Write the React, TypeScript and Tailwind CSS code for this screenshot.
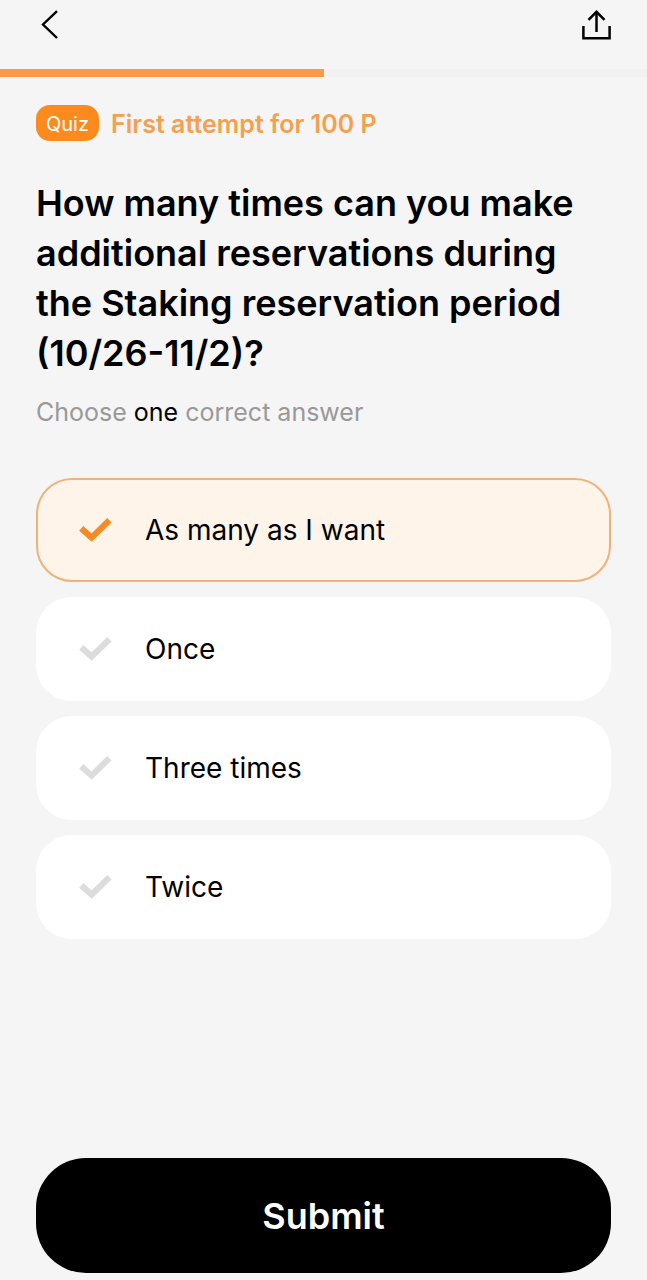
import React, { useState } from 'react'

interface Answer {
  id: string
  label: string
}

const answers: Answer[] = [
  { id: 'any', label: 'As many as I want' },
  { id: 'once', label: 'Once' },
  { id: 'three', label: 'Three times' },
  { id: 'twice', label: 'Twice' },
]

function BackIcon() {
  return (
    <svg className="w-8 h-8" viewBox="0 0 32 32" fill="none" stroke="currentColor" strokeWidth="2.4">
      <path d="M21 3.2 7 16.5 21 30" />
    </svg>
  )
}

function ShareIcon() {
  return (
    <svg className="w-8 h-8" viewBox="0 0 32 32" fill="none" stroke="currentColor" strokeWidth="2.5">
      <path d="M4.4 18v12.2h26.2V18" />
      <path d="M17.5 24V4.2" />
      <path d="m9.5 11.8 8-8 8 8" />
    </svg>
  )
}

function CheckIcon({ className }: { className: string }) {
  return (
    <svg className={className} viewBox="0 0 34 26" fill="none" stroke="currentColor" strokeWidth="6.2">
      <path d="M3.2 11.4 13.6 20.6 31.4 3.2" />
    </svg>
  )
}

export default function App() {
  const [selected, setSelected] = useState('any')
  const progress = 50

  return (
    <div className="flex min-h-screen flex-col bg-[#f5f5f5] font-['Inter',sans-serif] text-black">
      {/* Top bar */}
      <header className="flex h-[69px] items-start justify-between px-9 pt-2">
        <button type="button" aria-label="Back">
          <BackIcon />
        </button>
        <button type="button" aria-label="Share">
          <ShareIcon />
        </button>
      </header>

      {/* Progress */}
      <div className="h-2 bg-[#f2f2f2]">
        <div className="h-full bg-[#fb9a45]" style={{ width: `${progress}%` }} />
      </div>

      <form
        className="flex flex-1 flex-col px-9 pb-[7px]"
        onSubmit={(e) => e.preventDefault()}
      >
        <div className="mt-7 flex items-center gap-3">
          <span className="flex h-9 items-center rounded-[14px] bg-[#fd8a1c] px-[10px] pt-[2px] text-xl text-white">
            Quiz
          </span>
          <span className="pt-[2px] text-[25px] leading-[34px] font-semibold text-[#f3a04f]">
            First attempt for 100 P
          </span>
        </div>

        <h1 className="mt-[37px] text-4xl leading-[50px] font-semibold">
          How many times can you make additional reservations during the Staking reservation period
          (10/26-11/2)?
        </h1>
        <p className="mt-4 text-[25px] leading-[36px] text-[#999999]">
          Choose <span className="text-black">one</span> correct answer
        </p>

        {/* Answers */}
        <div className="mt-12 flex flex-col gap-[15px]" role="radiogroup" aria-label="Answers">
          {answers.map((answer) => {
            const active = answer.id === selected
            return (
              <label
                key={answer.id}
                className={`relative flex h-[104px] cursor-pointer items-center gap-[33px] rounded-[36px] border-2 px-10 text-[28px] ${
                  active ? 'border-[#efb27a] bg-[#fff4ea]' : 'border-white bg-white'
                }`}
              >
                <input
                  type="radio"
                  name="answer"
                  value={answer.id}
                  checked={active}
                  onChange={() => setSelected(answer.id)}
                  className="sr-only"
                />
                <CheckIcon
                  className={`h-[26px] w-[34px] shrink-0 ${active ? 'text-[#f68a24]' : 'text-[#dcdcdc]'}`}
                />
                {answer.label}
              </label>
            )
          })}
        </div>

        <button
          type="submit"
          className="mt-auto h-[115px] shrink-0 rounded-[50px] bg-black text-4xl font-semibold text-white"
        >
          Submit
        </button>
      </form>
    </div>
  )
}
